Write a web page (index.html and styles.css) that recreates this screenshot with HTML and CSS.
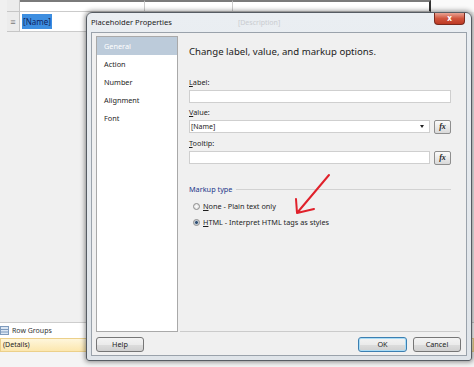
FILE: index.html
```html
<!DOCTYPE html>
<html><head>
<meta charset="utf-8">
<title>Placeholder Properties</title>
<link rel="stylesheet" href="styles.css">
</head>
<body>
<div class="app">
	<div class="top">
		<div class="sheet">
			<div class="sheet-row head">
				<div class="handle"></div>
				<div class="cell c1"></div>
				<div class="cell c2"></div>
				<div class="cell c3"></div>
			</div>
			<div class="sheet-row body">
				<div class="handle">&#8801;</div>
				<div class="cell c1"><span class="sel">[Name]</span></div>
				<div class="cell c2"></div>
				<div class="cell c3"></div>
			</div>
		</div>
		<div class="sheet-rest"></div>
	</div>
	<div class="canvas"></div>
	<div class="group-bar">
		<svg class="grp-icon" width="9" height="9" viewBox="0 0 9 9"><rect x="0.5" y="0.5" width="8" height="8" fill="#dbe6f3" stroke="#7f9bbd"/><path d="M1 3.5h7M1 6h7" stroke="#7f9bbd"/></svg>
		<span>Row Groups</span>
	</div>
	<div class="group-row">(Details)</div>
	<div class="bottom"></div>
</div>

<div class="dialog">
	<div class="titlebar">
		<span class="title">Placeholder Properties</span>
		<span class="ghost">[Description]</span>
		<span class="close">x</span>
	</div>
	<div class="client">
		<div class="main">
			<ul class="nav">
				<li class="on">General</li>
				<li>Action</li>
				<li>Number</li>
				<li>Alignment</li>
				<li>Font</li>
			</ul>
			<div class="page">
				<div class="heading">Change label, value, and markup options.</div>

				<div class="field first">
					<label><u>L</u>abel:</label>
					<div class="row"><div class="input"></div></div>
				</div>
				<div class="field">
					<label><u>V</u>alue:</label>
					<div class="row"><div class="input"><span>[Name]</span><span class="caret"></span></div><span class="fx">fx</span></div>
				</div>
				<div class="field">
					<label><u>T</u>ooltip:</label>
					<div class="row"><div class="input"></div><span class="fx">fx</span></div>
				</div>

				<div class="legend">Markup type</div>
				<div class="radio"><span class="dot"></span><span><u>N</u>one - Plain text only</span></div>
				<div class="radio"><span class="dot checked"></span><span><u>H</u>TML - Interpret HTML tags as styles</span></div>
			</div>
		</div>
		<div class="footer">
			<span class="btn">Help</span>
			<span class="btn ok">OK</span>
			<span class="btn">Cancel</span>
		</div>
	</div>
</div>

<svg class="arrow" width="474" height="367" viewBox="0 0 474 367">
	<path d="M329 175 L297 213 M296 199 L297 213 L314 209" fill="none" stroke="#e0212b" stroke-width="2" stroke-linecap="round" stroke-linejoin="round"/>
</svg>
</body>
</html>
```

FILE: styles.css
```css
body {
	margin: 0;
	width: 474px;
	height: 367px;
	overflow: hidden;
	position: relative;
	background: #f0f0f0;
	font-family: "Noto Sans", "Open Sans", sans-serif;
	font-size: 7.3px;
	color: #1e1e1e;
}

/* designer behind the dialog */
.app { display: flex; flex-direction: column; height: 367px; }
.top { display: flex; }
.sheet { margin-left: 7px; display: flex; flex-direction: column; }
.sheet-row { display: flex; }
.sheet-row.head { height: 12px; }
.sheet-row.body { height: 20px; }
.handle {
	width: 13px;
	box-sizing: border-box;
	background: #ececec;
	border-right: 1px solid #c6c6c6;
	border-bottom: 1px solid #c6c6c6;
	color: #777;
	font-size: 9px;
	line-height: 20px;
	text-align: center;
}
.cell {
	box-sizing: border-box;
	background: #fff;
	border-right: 1px solid #cbcbcb;
	border-bottom: 1px solid #cbcbcb;
}
.head .cell { border-top: 2px solid #7a7a7a; }
.c1 { width: 125px; }
.c2 { width: 88px; }
.c3 { width: 198px; border-right: 2px solid #333; }
.body .c1 { padding: 4px 0 0 2px; }
.sel {
	background: #3d8ee0;
	color: #0f1f5e;
	font-size: 8px;
	padding: 2px 1px;
}
.sheet-rest { flex: 1; height: 12px; background: #fafafa; }
.canvas { flex: 1; }
.group-bar {
	height: 16px;
	box-sizing: border-box;
	border-top: 1px solid #cdcdcd;
	background: #fff;
	display: flex;
	align-items: center;
	gap: 3px;
	font-size: 7px;
	color: #333;
}
.group-row {
	height: 14px;
	box-sizing: border-box;
	border: 1px solid #ecd08a;
	background: linear-gradient(#fef6dc, #fce7ae);
	padding-left: 2px;
	line-height: 12px;
	font-size: 7px;
}
.bottom { height: 15px; background: #f4f4f4; }

/* dialog window */
.dialog {
	position: absolute;
	left: 86px;
	top: 12px;
	width: 386px;
	height: 349px;
	box-sizing: border-box;
	border: 1px solid #565c63;
	border-radius: 6px 6px 3px 3px;
	background: linear-gradient(#eaeef2, #dfe4e9);
	box-shadow: 0 0 5px 1px rgba(0,0,0,.45);
	display: flex;
	flex-direction: column;
}
.titlebar {
	height: 19px;
	display: flex;
	align-items: flex-start;
	padding: 0 6px 0 4px;
}
.title { font-size: 7.6px; line-height: 19px; color: #222; }
.ghost { margin-left: 66px; font-size: 7px; line-height: 19px; color: #c9ccd0; }
.close {
	margin-left: auto;
	width: 31px;
	height: 12px;
	box-sizing: border-box;
	border: 1px solid #7a2a1e;
	border-top: none;
	border-radius: 0 0 4px 4px;
	background: linear-gradient(#e9a393, #d0553d 50%, #bd3a25);
	color: #fff;
	font-weight: bold;
	font-size: 8px;
	line-height: 10px;
	text-align: center;
}
.client {
	flex: 1;
	margin: 0 4px 4px;
	border: 1px solid #9aa2ab;
	background: #f0f0f0;
	display: flex;
	flex-direction: column;
}
.main { flex: 1; display: flex; padding: 3px 0 0 4px; }

.nav {
	width: 82px;
	box-sizing: border-box;
	margin: 0;
	padding: 0;
	list-style: none;
	background: #fff;
	border: 1px solid #a9a9a9;
}
.nav li { height: 18px; line-height: 18px; padding-left: 7px; }
.nav li.on { background: #bccbda; color: #fff; }

.page {
	flex: 1;
	margin: 0 6px 0 2px;
	padding: 0 9px;
	border-bottom: 1px solid #cbcbcb;
}
.heading { margin-top: 9px; font-size: 9.6px; line-height: 14px; color: #222; }
.field { margin-top: 3px; }
.field.first { margin-top: 17px; }
.field label { display: block; line-height: 12px; }
.row { display: flex; gap: 4px; margin-top: 2px; }
.input {
	flex: 1;
	height: 13px;
	box-sizing: border-box;
	border: 1px solid #cfcfcf;
	background: #fff;
	display: flex;
	align-items: center;
	padding: 0 5px 0 1px;
	font-size: 7px;
}
.caret {
	margin-left: auto;
	border-left: 2px solid transparent;
	border-right: 2px solid transparent;
	border-top: 3px solid #222;
}
.fx {
	width: 17px;
	height: 14px;
	box-sizing: border-box;
	border: 1px solid #8e8e8e;
	border-radius: 2px;
	background: linear-gradient(#fbfbfb, #d9d9d9);
	font-family: "Liberation Serif", serif;
	font-style: italic;
	font-weight: bold;
	font-size: 8px;
	line-height: 12px;
	text-align: center;
}
.legend {
	margin-top: 18px;
	margin-bottom: 3px;
	display: flex;
	align-items: center;
	gap: 4px;
	line-height: 12px;
	color: #24388a;
}
.legend::after { content: ""; flex: 1; border-top: 1px solid #d2d2d2; }
.radio { display: flex; align-items: center; gap: 3px; line-height: 16px; padding-left: 4px; }
.dot {
	width: 7px;
	height: 7px;
	box-sizing: border-box;
	border: 1px solid #8d8d8d;
	border-radius: 50%;
	background: radial-gradient(#fdfdfd, #d8d8d8);
}
.dot.checked { background: radial-gradient(#2f4f73 30%, #9fb0c2 45%, #e4e4e4 70%); }

.footer { display: flex; gap: 6px; padding: 5px 5px 3px 4px; }
.btn {
	width: 48px;
	height: 15px;
	box-sizing: border-box;
	border: 1px solid #767676;
	border-radius: 3px;
	background: linear-gradient(#f3f3f3, #ebebeb 50%, #dddddd 51%, #d0d0d0);
	text-align: center;
	line-height: 13px;
}
.btn.ok { margin-left: auto; width: 49px; border-color: #3c7fb1; box-shadow: inset 0 0 0 1px #a9dcf6; }

.arrow { position: absolute; left: 0; top: 0; pointer-events: none; }
```
